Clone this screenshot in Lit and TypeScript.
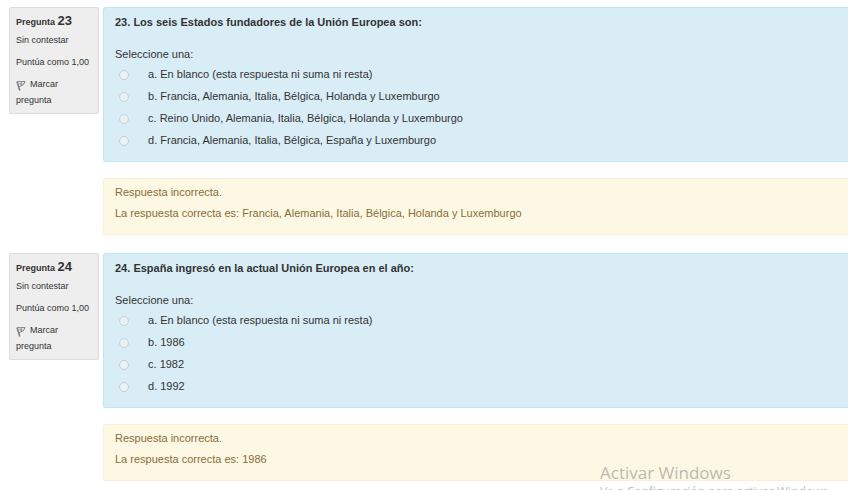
import { LitElement, html, css } from "lit";
import { customElement, property } from "lit/decorators.js";

interface Question {
  number: number;
  text: string;
  options: string[];
  correct: string;
}

const QUESTIONS: Question[] = [
  {
    number: 23,
    text: "Los seis Estados fundadores de la Unión Europea son:",
    options: [
      "En blanco (esta respuesta ni suma ni resta)",
      "Francia, Alemania, Italia, Bélgica, Holanda y Luxemburgo",
      "Reino Unido, Alemania, Italia, Bélgica, Holanda y Luxemburgo",
      "Francia, Alemania, Italia, Bélgica, España y Luxemburgo",
    ],
    correct: "Francia, Alemania, Italia, Bélgica, Holanda y Luxemburgo",
  },
  {
    number: 24,
    text: "España ingresó en la actual Unión Europea en el año:",
    options: ["En blanco (esta respuesta ni suma ni resta)", "1986", "1982", "1992"],
    correct: "1986",
  },
];

@customElement("quiz-question")
export class QuizQuestion extends LitElement {
  @property({ attribute: false }) question!: Question;

  static styles = css`
    :host {
      display: grid;
      grid-template-columns: 90px minmax(0, 1fr);
      column-gap: 4px;
      align-items: start;
    }
    .info {
      box-sizing: border-box;
      padding: 3px 6px 5px;
      border: 1px solid #dcdcdc;
      border-radius: 2px;
      background: #eeeeee;
      font-size: 9px;
      line-height: 16px;
      color: #333333;
    }
    .info h3 {
      margin: 0;
      font-size: 9px;
      line-height: 20px;
      font-weight: bold;
    }
    .number {
      font-size: 13px;
    }
    .info p {
      margin: 0 0 6px;
      white-space: nowrap;
    }
    .flag {
      display: block;
      padding: 0;
      border: 0;
      background: none;
      font: inherit;
      color: inherit;
      text-align: left;
      cursor: pointer;
    }
    .flag svg {
      width: 10px;
      height: 11px;
      margin-right: 4px;
      vertical-align: -4px;
    }
    .box {
      box-sizing: border-box;
      margin: 0;
      border: 1px solid;
      border-right: 0;
      border-radius: 3px 0 0 3px;
    }
    .formulation {
      padding: 4px 11px 10px;
      border-color: #bce8f1;
      background: #d9edf7;
      color: #333333;
    }
    .formulation h4 {
      margin: 0 0 13px;
      font-size: 11px;
      line-height: 20px;
    }
    fieldset {
      margin: 0;
      padding: 0;
      border: 0;
    }
    legend {
      padding: 0;
      line-height: 18px;
    }
    .option {
      display: flex;
      align-items: center;
      height: 22px;
    }
    .option input {
      appearance: none;
      box-sizing: border-box;
      flex: none;
      width: 10px;
      height: 10px;
      margin: 2px 19px 0 4px;
      border: 1px solid #c8cfd3;
      border-radius: 50%;
      background: #ebf2f5;
    }
    .feedback {
      margin-top: 16px;
      padding: 3px 11px 10px;
      border-color: #fbeed5;
      background: #fcf8e3;
      color: #8a6d3b;
      line-height: 21px;
    }
    .feedback p {
      margin: 0;
    }
  `;

  render() {
    const q = this.question;
    return html`
      <section class="info">
        <h3>Pregunta <span class="number">${q.number}</span></h3>
        <p>Sin contestar</p>
        <p>Puntúa como 1,00</p>
        <button class="flag" type="button">
          <svg viewBox="0 0 10 11" fill="none" stroke="#808080" aria-hidden="true">
            <path d="M1 1.5 3.8 10.5" stroke-width="1.6" />
            <path d="M1 1.8 9 1.5 7.4 4.8 3 6.6" />
            <path d="M2.4 3.2 8 3.2 5.2 5.6Z" fill="#b4b4b4" stroke="none" />
            <path d="M5.2 1.8 5.2 5.4" stroke-width="0.8" />
          </svg>Marcar pregunta
        </button>
      </section>
      <div>
        <section class="box formulation">
          <h4>${q.number}. ${q.text}</h4>
          <fieldset>
            <legend>Seleccione una:</legend>
            ${q.options.map(
              (text, i) => html`
                <div class="option">
                  <input type="radio" name="answer" id="answer-${i}" disabled />
                  <label for="answer-${i}">${"abcd"[i]}. ${text}</label>
                </div>
              `,
            )}
          </fieldset>
        </section>
        <section class="box feedback">
          <p>Respuesta incorrecta.</p>
          <p>La respuesta correcta es: ${q.correct}</p>
        </section>
      </div>
    `;
  }
}

@customElement("app-root")
export class AppRoot extends LitElement {
  static styles = css`
    :host {
      display: block;
      position: relative;
      box-sizing: border-box;
      min-height: 100vh;
      overflow: hidden;
      background: #ffffff;
      font: 11px/20px "Liberation Sans", Arial, sans-serif;
    }
    .questions {
      display: grid;
      row-gap: 18px;
      padding: 7px 0 9px 9px;
    }
    .watermark {
      position: absolute;
      right: 14px;
      bottom: -12px;
      width: 234px;
      font-family: "Open Sans", "Noto Sans", sans-serif;
      color: rgba(120, 120, 120, 0.5);
      pointer-events: none;
      white-space: nowrap;
    }
    .watermark p {
      margin: 0;
    }
    .headline {
      font-size: 17px;
      line-height: 18px;
    }
    .hint {
      font-size: 12px;
      line-height: 20px;
    }
  `;

  render() {
    return html`
      <main class="questions">
        ${QUESTIONS.map((q) => html`<quiz-question .question=${q}></quiz-question>`)}
      </main>
      <aside class="watermark">
        <p class="headline">Activar Windows</p>
        <p class="hint">Ve a Configuración para activar Windows.</p>
      </aside>
    `;
  }
}
